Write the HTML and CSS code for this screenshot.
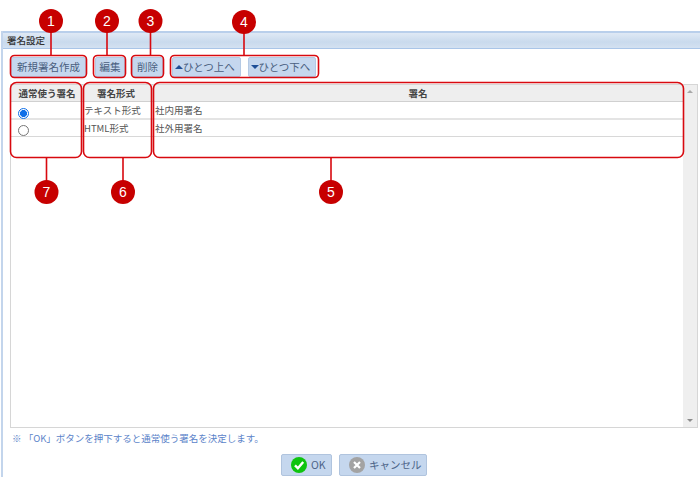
FILE: index.html
```html
<!DOCTYPE html>
<html lang="ja">
<head>
<meta charset="utf-8">
<title>署名設定</title>
<link rel="stylesheet" href="styles.css">
</head>
<body>
<div class="panel">
  <div class="title">署名設定</div>
  <div class="content">
    <div class="toolbar">
      <button class="btn btn-new">新規署名作成</button>
      <button class="btn btn-edit">編集</button>
      <button class="btn btn-del">削除</button>
      <button class="btn btn-up"><span class="tri-up"></span>ひとつ上へ</button>
      <button class="btn btn-down"><span class="tri-down"></span>ひとつ下へ</button>
    </div>
    <div class="grid">
      <div class="grid-main">
        <div class="row head">
          <div class="c1">通常使う署名</div>
          <div class="c2">署名形式</div>
          <div class="c3">署名</div>
        </div>
        <div class="row body-row thick">
          <div class="c1"><span class="radio on"></span></div>
          <div class="c2">テキスト形式</div>
          <div class="c3">社内用署名</div>
        </div>
        <div class="row body-row">
          <div class="c1"><span class="radio"></span></div>
          <div class="c2">HTML形式</div>
          <div class="c3">社外用署名</div>
        </div>
      </div>
      <div class="scrollbar">
        <span class="sb-up"></span>
        <span class="sb-down"></span>
      </div>
    </div>
    <p class="note">※ 「OK」ボタンを押下すると通常使う署名を決定します。</p>
    <div class="actions">
      <button class="btn act act-ok">
        <svg class="act-icon" viewBox="0 0 16 16"><circle cx="8" cy="8" r="8" fill="#0fc40f"/><path d="M4 8.3l2.9 3L12.2 5" fill="none" stroke="#fff" stroke-width="2.4"/></svg>OK
      </button>
      <button class="btn act act-cancel">
        <svg class="act-icon" viewBox="0 0 16 16"><circle cx="8" cy="8" r="8" fill="#a3a3a3"/><path d="M5 5l6 6M11 5l-6 6" fill="none" stroke="#fff" stroke-width="2.2"/></svg>キャンセル
      </button>
    </div>
  </div>
</div>
<svg class="marks" width="700" height="477" viewBox="0 0 700 477">
  <g class="mark-lines">
    <path d="M51 21V56M107 21V56M150.500 21V56M244 21V56M46.500 157V192M123 157V192M331 157V192"/>
    <rect x="10.500" y="55.500" width="76" height="22" rx="4"/>
    <rect x="93.500" y="55.500" width="32" height="22" rx="4"/>
    <rect x="131.500" y="55.500" width="32" height="22" rx="4"/>
    <rect x="170.500" y="55.500" width="148" height="22" rx="4"/>
    <rect x="10.500" y="82.500" width="71" height="75" rx="6"/>
    <rect x="83.500" y="82.500" width="68" height="75" rx="6"/>
    <rect x="153.500" y="82.500" width="530" height="75" rx="6"/>
  </g>
  <g class="mark-dots">
    <circle cx="51" cy="21" r="12"/><circle cx="107" cy="21" r="12"/><circle cx="150.500" cy="21" r="12"/><circle cx="244" cy="22" r="12"/>
    <circle cx="331" cy="192" r="12"/><circle cx="123" cy="192" r="12"/><circle cx="46.500" cy="192" r="12"/>
  </g>
  <g class="mark-nums">
    <text x="51" y="26">1</text><text x="107" y="26">2</text><text x="150.500" y="26">3</text><text x="244" y="27">4</text>
    <text x="331" y="197">5</text><text x="123" y="197">6</text><text x="46.500" y="197">7</text>
  </g>
</svg>
</body>
</html>
```
FILE: styles.css
```css
* { box-sizing: border-box; }
html, body { margin: 0; height: 100%; overflow: hidden; background: #fff; }
body {
  position: relative;
  width: 700px;
  height: 477px;
  font-family: "Noto Sans CJK JP", "Liberation Sans", sans-serif;
  color: #444;
}
.panel {
  margin: 31px 0 0 1px;
  height: 446px;
  border-left: 2px solid #c3d5ec;
}
.title {
  height: 18px;
  border-top: 2px solid #b9cfeb;
  border-bottom: 1px solid #a9c5e8;
  background: linear-gradient(#dfe9f5, #c9daed 60%, #d3e1f1);
  padding-left: 4px;
  font-size: 9.5px;
  line-height: 15px;
  font-weight: 500;
  color: #333;
}
.content { padding: 8px 2px 0 7px; }
.toolbar { display: flex; height: 20px; }
.btn {
  border: 1px solid #b4c9e4;
  border-radius: 2px;
  background: #c5d7ee;
  color: #4a5f80;
  font: inherit;
  font-size: 10.5px;
  line-height: 16px;
  padding: 0;
  text-align: center;
  white-space: nowrap;
}
.btn-new { width: 75px; margin-left: 1px; }
.btn-edit { width: 30px; margin-left: 9px; }
.btn-del { width: 31px; margin-left: 7px; }
.btn-up { width: 69px; margin-left: 9px; padding-right: 3px; }
.btn-down { width: 68px; margin-left: 7px; padding-right: 3px; }
.tri-up, .tri-down {
  display: inline-block;
  width: 0;
  height: 0;
  border-left: 4px solid transparent;
  border-right: 4px solid transparent;
  vertical-align: 2px;
}
.tri-up { border-bottom: 4px solid #1f4f96; }
.tri-down { border-top: 4px solid #1f4f96; }
.grid {
  display: flex;
  margin-top: 7px;
  height: 344px;
  border: 1px solid #d6d6d6;
}
.grid-main { flex: 1; }
.row { display: flex; }
.head {
  height: 17px;
  background: #eeeeee;
  border-bottom: 1px solid #d0d0d0;
  font-size: 9.5px;
  font-weight: 700;
  color: #444;
  line-height: 16px;
  text-align: center;
}
.head .c2 { padding-right: 4px; }
.body-row {
  height: 17px;
  border-bottom: 1px solid #d8d8d8;
  font-size: 9.5px;
  line-height: 16px;
  color: #555;
}
.body-row.thick {
  height: 18px;
  border-bottom: 2px solid #e4e4e4;
  line-height: 17px;
}
.c1 { width: 72px; }
.c2 { width: 70px; }
.c3 { flex: 1; }
.body-row .c3 { padding-left: 2px; }
.body-row .c2 { padding-left: 1px; }
.radio {
  display: block;
  width: 11px;
  height: 11px;
  margin: 5px 0 0 7px;
  border: 1px solid #767676;
  border-radius: 50%;
  background: #fff;
}
.radio.on {
  margin-top: 6px;
  border-color: #0f6fe8;
  background: radial-gradient(circle, #0f6fe8 0 3.2px, #fff 3.8px);
}
.scrollbar {
  position: relative;
  width: 14px;
  background: #efefef;
}
.sb-up, .sb-down {
  position: absolute;
  left: 4px;
  width: 0;
  height: 0;
  border-left: 3px solid transparent;
  border-right: 3px solid transparent;
}
.sb-up { top: 5px; border-bottom: 3px solid #a8a8a8; }
.sb-down { bottom: 5px; border-top: 3px solid #8c8c8c; }
.note {
  margin: 3px 0 0 2px;
  font-size: 9.5px;
  line-height: 14px;
  color: #5b83c9;
}
.actions {
  display: flex;
  gap: 7px;
  margin: 9px 0 0 271px;
}
.act {
  display: flex;
  align-items: center;
  height: 22px;
  border-color: #b0c4de;
  color: #4d6488;
  line-height: 20px;
}
.act-ok { width: 51px; padding-left: 9px; }
.act-cancel { width: 88px; padding-left: 9px; }
.act-icon { width: 16px; height: 16px; margin-right: 4px; flex: none; }
.marks { position: absolute; left: 0; top: 0; }
.mark-lines { fill: none; stroke: #d8090f; stroke-width: 1.6; }
.mark-dots { fill: #c70000; }
.mark-nums {
  fill: #fff;
  font-family: "Liberation Sans", sans-serif;
  font-size: 14px;
  text-anchor: middle;
}
```
